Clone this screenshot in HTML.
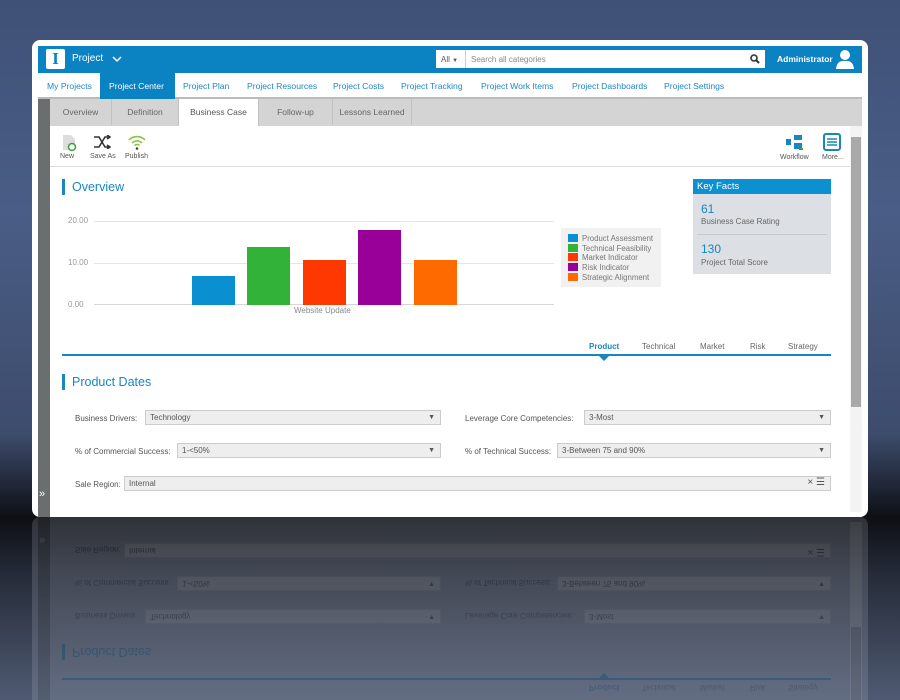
<!DOCTYPE html>
<html><head><meta charset="utf-8"><style>
*{box-sizing:border-box;margin:0;padding:0}
html,body{width:900px;height:700px;overflow:hidden}
body{position:relative;font-family:"Liberation Sans",sans-serif;background:linear-gradient(#3f5176 0%,#4a5d86 30%,#3d4c6c 62%,#0d0f14 74%,#252b38 82%,#4f5a72 100%)}
.card{position:absolute;left:32px;top:40px;width:836px;height:477px;background:#fff;border-radius:8px;overflow:hidden}
.a{position:absolute}
.top{left:6px;top:6px;width:824px;height:27px;background:#0b82c2}
.nav{left:6px;top:33px;width:824px;height:26px;background:#fff;border-bottom:2px solid #bbb;font-size:8.6px;color:#1f86c0}
.nav span{position:absolute;top:8px}
.tabs{left:6px;top:59px;width:824px;height:27px;background:#d4d4d4}
.tab{position:absolute;top:0;height:26px;font-size:8.5px;color:#666;text-align:center;line-height:26px;border-right:1px solid #c2c2c2}
.lbl{font-size:8px;color:#555}
.fld{position:absolute;height:15px;background:#eee;border:1px solid #ccc;font-size:8px;color:#555;padding-left:4px;line-height:13px}
.fld i{position:absolute;right:5px;top:0;font-style:normal;font-size:7px}
.h{font-size:12.5px;color:#1a86c0;border-left:3px solid #1a86c0;padding-left:7px;height:16px;line-height:16px}
.leg div{height:9.7px;font-size:7.8px;color:#777;line-height:9.7px}
.leg b{display:inline-block;width:10px;height:8px;margin-right:4px;vertical-align:-1px}
</style></head><body>
<div id="refl" class="a" style="left:0;top:517px;width:900px;height:183px;overflow:hidden;opacity:.2"></div>
<div class="card" id="card">
<div class="a top">
 <div class="a" style="left:8px;top:3px;width:19px;height:20px;background:#fff;border-radius:2px;color:#0b82c2;font:bold 17px 'Liberation Serif',serif;text-align:center;line-height:20px">I</div>
 <div class="a" style="left:34px;top:7px;color:#fff;font-size:10px">Project</div>
 <svg class="a" style="left:74px;top:9px" width="10" height="8"><path d="M1 2l4 4 4-4" stroke="#fff" stroke-width="1.5" fill="none"/></svg>
 <div class="a" style="left:398px;top:4px;width:30px;height:18px;background:#fff;border-right:1px solid #ccc;font-size:8px;color:#555;padding:5px 5px">All <span style="font-size:6px">▼</span></div>
 <div class="a" style="left:428px;top:4px;width:299px;height:18px;background:#fff;font-size:8px;color:#888;padding:5px 5px">Search all categories
  <svg style="position:absolute;right:5px;top:4px" width="10" height="10"><circle cx="4" cy="4" r="3" stroke="#333" stroke-width="1.6" fill="none"/><path d="M6 6l3 3" stroke="#333" stroke-width="2"/></svg></div>
 <div class="a" style="left:739px;top:8px;color:#fff;font-size:8.5px;font-weight:bold">Administrator</div>
 <svg class="a" style="left:798px;top:3px" width="18" height="20" viewBox="0 0 18 20"><circle cx="9" cy="6" r="5" fill="#fff"/><path d="M0 20 Q1 11 9 12 Q17 11 18 20Z" fill="#fff"/></svg>
</div>
<div class="a nav">
 <span style="left:9px">My Projects</span>
 <div class="a" style="left:62px;top:0;width:75px;height:26px;background:#0b82c2"></div>
 <span style="left:71px;color:#fff">Project Center</span>
 <span style="left:145px">Project Plan</span><span style="left:209px">Project Resources</span><span style="left:295px">Project Costs</span><span style="left:363px">Project Tracking</span><span style="left:443px">Project Work Items</span><span style="left:534px">Project Dashboards</span><span style="left:626px">Project Settings</span>
</div>
<div class="a" style="left:6px;top:59px;width:12px;height:418px;background:#6b6e6e"></div>
<div class="a" style="left:7px;top:448px;color:#fff;font-size:11px">»</div>
<div class="a tabs" style="left:18px;width:812px">
 <div class="tab" style="left:0;width:62px">Overview</div>
 <div class="tab" style="left:62px;width:67px">Definition</div>
 <div class="tab" style="left:129px;width:80px;background:#fff;height:27px;color:#555">Business Case</div>
 <div class="tab" style="left:209px;width:74px">Follow-up</div>
 <div class="tab" style="left:283px;width:79px">Lessons Learned</div>
</div>
<div class="a" style="left:818px;top:86px;width:12px;height:386px;background:#f4f4f4"></div>
<div class="a" style="left:819px;top:97px;width:10px;height:270px;background:#a9a9a9"></div>
<div class="a" style="left:18px;top:126px;width:800px;height:1px;background:#ddd"></div>
<svg class="a" style="left:30px;top:94px" width="16" height="18"><path d="M1 1h8l4 4v11H1z" fill="#ddd"/><circle cx="10" cy="13" r="3.5" fill="#fff" stroke="#3aa13a" stroke-width="1.5"/></svg>
<div class="a" style="left:28px;top:113px;font-size:7px;color:#555">New</div>
<svg class="a" style="left:61px;top:95px" width="18" height="14"><path d="M1 2l5 0 6 10 5 0M1 12l5 0 6-10 5 0M14 0l3 2-3 2M14 10l3 2-3 2" stroke="#333" stroke-width="1.6" fill="none"/></svg>
<div class="a" style="left:58px;top:113px;font-size:7px;color:#555">Save As</div>
<svg class="a" style="left:96px;top:94px" width="18" height="16"><path d="M1 6a11 11 0 0 1 16 0M4 9a7 7 0 0 1 10 0M6.5 11.5a3.5 3.5 0 0 1 5 0" stroke="#8bc43f" stroke-width="1.6" fill="none"/><circle cx="9" cy="14.5" r="1.3" fill="#444"/></svg>
<div class="a" style="left:93px;top:113px;font-size:7px;color:#555">Publish</div>
<svg class="a" style="left:754px;top:95px" width="18" height="16"><rect x="0" y="4" width="5" height="6" fill="#1a86c0"/><rect x="8" y="0" width="8" height="5" fill="#1a86c0"/><rect x="8" y="8" width="8" height="6" fill="#1a86c0"/><path d="M13 14l4 0" stroke="#3aa13a" stroke-width="2"/></svg>
<div class="a" style="left:748px;top:114px;font-size:7px;color:#555">Workflow</div>
<svg class="a" style="left:791px;top:93px" width="18" height="18"><rect x="1" y="1" width="16" height="16" rx="2" fill="#fff" stroke="#1a86c0" stroke-width="2"/><path d="M4 6h10M4 9h10M4 12h10" stroke="#1a86c0" stroke-width="1.6"/></svg>
<div class="a" style="left:790px;top:114px;font-size:7px;color:#555">More...</div>
<div class="a h" style="left:30px;top:139px">Overview</div>
<div class="a" style="left:36px;top:176px;font-size:8px;color:#999">20.00</div>
<div class="a" style="left:36px;top:218px;font-size:8px;color:#999">10.00</div>
<div class="a" style="left:36px;top:260px;font-size:8px;color:#999">0.00</div>
<div class="a" style="left:62px;top:181px;width:460px;height:1px;background:#e6e6e6"></div>
<div class="a" style="left:62px;top:223px;width:460px;height:1px;background:#e6e6e6"></div>
<div class="a" style="left:62px;top:264px;width:460px;height:1px;background:#d6d6d6"></div>
<div class="a" style="left:160px;top:236px;width:43px;height:29px;background:#0a8fd0"></div>
<div class="a" style="left:215px;top:207px;width:43px;height:58px;background:#33b23a"></div>
<div class="a" style="left:271px;top:220px;width:43px;height:45px;background:#ff3700"></div>
<div class="a" style="left:326px;top:190px;width:43px;height:75px;background:#990099"></div>
<div class="a" style="left:382px;top:220px;width:43px;height:45px;background:#ff6a00"></div>
<div class="a" style="left:262px;top:266px;font-size:8px;color:#888">Website Update</div>
<div class="a leg" style="left:529px;top:188px;width:100px;height:59px;background:#f1f1f1;padding:6px 0 0 7px">
 <div><b style="background:#0a8fd0"></b>Product Assessment</div><div><b style="background:#33b23a"></b>Technical Feasibility</div><div><b style="background:#ff3700"></b>Market Indicator</div><div><b style="background:#990099"></b>Risk Indicator</div><div><b style="background:#ff6a00"></b>Strategic Alignment</div>
</div>
<div class="a" style="left:661px;top:139px;width:138px;height:95px;background:#dcdfe3">
 <div style="background:#0b91d2;color:#fff;font-size:9.5px;height:15px;line-height:15px;padding-left:4px">Key Facts</div>
 <div class="a" style="left:8px;top:23px;font-size:12px;color:#1a86c0">61</div>
 <div class="a" style="left:8px;top:38px;font-size:8px;color:#666">Business Case Rating</div>
 <div class="a" style="left:4px;top:55px;width:130px;height:1px;background:#c6c9cd"></div>
 <div class="a" style="left:8px;top:63px;font-size:12px;color:#1a86c0">130</div>
 <div class="a" style="left:8px;top:79px;font-size:8px;color:#666">Project Total Score</div>
</div>
<div class="a" style="left:557px;top:302px;font-size:8px;color:#1a86c0;font-weight:bold">Product</div>
<div class="a" style="left:610px;top:302px;font-size:8px;color:#666">Technical</div>
<div class="a" style="left:668px;top:302px;font-size:8px;color:#666">Market</div>
<div class="a" style="left:718px;top:302px;font-size:8px;color:#666">Risk</div>
<div class="a" style="left:756px;top:302px;font-size:8px;color:#666">Strategy</div>
<div class="a" style="left:30px;top:314px;width:769px;height:2px;background:#1a86c0"></div>
<div class="a" style="left:566px;top:315px;width:0;height:0;border:6px solid transparent;border-top-color:#1a86c0"></div>
<div class="a h" style="left:30px;top:334px">Product Dates</div>
<div class="a lbl" style="left:43px;top:374px">Business Drivers:</div>
<div class="fld" style="left:113px;top:370px;width:296px">Technology<i>▼</i></div>
<div class="a lbl" style="left:433px;top:374px">Leverage Core Competencies:</div>
<div class="fld" style="left:552px;top:370px;width:247px">3-Most<i>▼</i></div>
<div class="a lbl" style="left:43px;top:407px">% of Commercial Success:</div>
<div class="fld" style="left:145px;top:403px;width:264px">1-&lt;50%<i>▼</i></div>
<div class="a lbl" style="left:433px;top:407px">% of Technical Success:</div>
<div class="fld" style="left:525px;top:403px;width:274px">3-Between 75 and 90%<i>▼</i></div>
<div class="a lbl" style="left:43px;top:440px">Sale Region:</div>
<div class="fld" style="left:92px;top:436px;width:707px">Internal<i style="font-size:10px;top:-1px">× ☰</i></div>
</div>
<script>
var c=document.getElementById('card').cloneNode(true);c.removeAttribute('id');
c.style.top='-477px';c.style.left='32px';c.style.background='#b8bdc8';c.style.transform='scaleY(-1)';c.style.transformOrigin='50% 100%';
document.getElementById('refl').appendChild(c);
</script>
</body></html>
